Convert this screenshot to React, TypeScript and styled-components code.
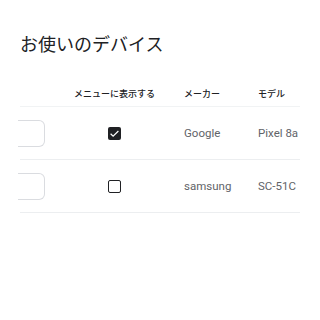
import React from 'react';
import styled, {createGlobalStyle} from 'styled-components';

const GlobalStyle = createGlobalStyle`
  html, body {
    margin: 0;
    padding: 0;
    background: #fff;
  }
  body {
    font-family: Roboto, "Noto Sans CJK JP", sans-serif;
  }
`;

const Page = styled.div`
  width: 320px;
  height: 320px;
  overflow: hidden;
`;

const Title = styled.h1`
  margin: 29px 0 23px 20px;
  font-family: "Noto Sans CJK JP", sans-serif;
  font-size: 18px;
  line-height: 28px;
  font-weight: 400;
  color: #202124;
`;

const Table = styled.div`
  margin-left: 20px;
  width: 280px;
`;

const Row = styled.div<{$head?: boolean}>`
  display: grid;
  grid-template-columns: 25px 139px 74px 42px;
  align-items: center;
  height: ${p => (p.$head ? 26 : 52)}px;
  border-bottom: 1px solid ${p => (p.$head ? '#f1f3f4' : '#eceef0')};
`;

const HeadCell = styled.div<{$center?: boolean}>`
  font-family: "Noto Sans CJK JP", sans-serif;
  font-size: 9px;
  font-weight: 500;
  color: #202124;
  white-space: nowrap;
  text-align: ${p => (p.$center ? 'center' : 'left')};
`;

const Cell = styled.div<{$center?: boolean}>`
  font-size: 11.5px;
  color: #5f6368;
  white-space: nowrap;
  display: flex;
  justify-content: ${p => (p.$center ? 'center' : 'flex-start')};
`;

const NameInput = styled.div`
  height: 25px;
  margin-left: -2px;
  border: 1px solid #dadce0;
  border-left: none;
  border-radius: 0 6px 6px 0;
`;

const Check = styled.div<{$on?: boolean}>`
  width: 13px;
  height: 13px;
  box-sizing: border-box;
  border-radius: 2px;
  border: ${p => (p.$on ? 0 : 1.6)}px solid #202124;
  background: ${p => (p.$on ? '#202124' : '#fff')};
  display: flex;
  align-items: center;
  justify-content: center;
`;

const devices = [
  {shown: true, maker: 'Google', model: 'Pixel 8a'},
  {shown: false, maker: 'samsung', model: 'SC-51C'},
];

export default function App() {
  return (
    <Page>
      <GlobalStyle />
      <Title>お使いのデバイス</Title>
      <Table>
        <Row $head>
          <HeadCell />
          <HeadCell $center>メニューに表示する</HeadCell>
          <HeadCell>メーカー</HeadCell>
          <HeadCell>モデル</HeadCell>
        </Row>
        {devices.map(d => (
          <Row key={d.model}>
            <NameInput />
            <Cell $center>
              <Check $on={d.shown}>
                {d.shown && (
                  <svg width="11" height="11" viewBox="0 0 24 24">
                    <path d="M3.5 12.5l5.5 5.5L20.5 6.5" fill="none" stroke="#fff" strokeWidth="2.6" />
                  </svg>
                )}
              </Check>
            </Cell>
            <Cell>{d.maker}</Cell>
            <Cell>{d.model}</Cell>
          </Row>
        ))}
      </Table>
    </Page>
  );
}
